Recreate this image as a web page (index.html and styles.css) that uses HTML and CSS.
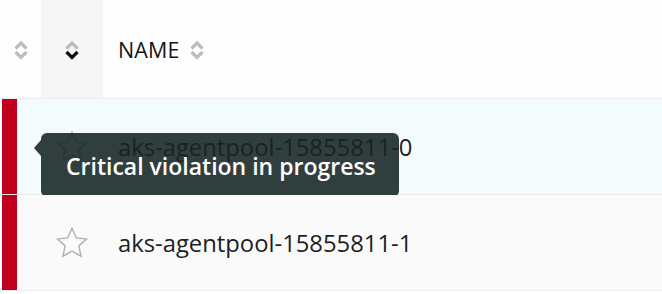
FILE: index.html
```html
<!DOCTYPE html>
<html>
<head>
<meta charset="utf-8">
<link rel="stylesheet" href="styles.css">
</head>
<body>
<div class="table">
  <div class="row head">
    <div class="cell c1">
      <svg class="sort" viewBox="0 0 16 24" width="16" height="24"><polyline points="2.5,10.5 8,5 13.5,10.5" class="g"/><polyline points="2.5,14 8,19.5 13.5,14" class="g"/></svg>
    </div>
    <div class="cell c2 shaded">
      <svg class="sort" viewBox="0 0 16 24" width="16" height="24"><polyline points="2.5,10.5 8,5 13.5,10.5" class="g"/><polyline points="2.5,14 8,19.5 13.5,14" class="k"/></svg>
    </div>
    <div class="cell c3">
      <span class="hname">NAME</span>
      <svg class="sort small" viewBox="0 0 16 24" width="16" height="24"><polyline points="2.5,10.5 8,5 13.5,10.5" class="g"/><polyline points="2.5,14 8,19.5 13.5,14" class="g"/></svg>
    </div>
  </div>
  <div class="row body active">
    <div class="cell c1"><div class="bar"></div></div>
    <div class="cell c2">
      <svg class="star" viewBox="0 0 24 24" width="36" height="36"><polygon points="12,2.2 14.9,8.6 21.6,9.3 16.6,13.9 18,20.8 12,17.4 6,20.8 7.4,13.9 2.4,9.3 9.1,8.6"/></svg>
    </div>
    <div class="cell c3"><span class="name">aks-agentpool-15855811-0</span></div>
    <div class="tooltip">Critical violation in progress</div>
  </div>
  <div class="row body">
    <div class="cell c1"><div class="bar"></div></div>
    <div class="cell c2">
      <svg class="star" viewBox="0 0 24 24" width="36" height="36"><polygon points="12,2.2 14.9,8.6 21.6,9.3 16.6,13.9 18,20.8 12,17.4 6,20.8 7.4,13.9 2.4,9.3 9.1,8.6"/></svg>
    </div>
    <div class="cell c3"><span class="name">aks-agentpool-15855811-1</span></div>
  </div>
</div>
</body>
</html>
```
FILE: styles.css
```css
html, body {
  margin: 0;
  padding: 0;
  background: #ffffff;
  font-family: "Open Sans", "Liberation Sans", sans-serif;
}
.table {
  width: 662px;
}
.row {
  display: grid;
  grid-template-columns: 41px 62px 1fr;
  border-bottom: 1px solid #ebebeb;
  position: relative;
}
.row.head {
  height: 98px;
  background: #fefefe;
}
.row.body {
  height: 95px;
  background: #fafafa;
}
.row.body.active {
  background: #f3fbfc;
}
.cell {
  display: flex;
  align-items: center;
}
.c1, .c2 {
  justify-content: center;
}
.row.body .c1 {
  justify-content: flex-start;
  align-items: stretch;
  background: linear-gradient(to right, #ffffff 0 17px, #fafafa 17px);
}
.row.body.active .c1 {
  background: linear-gradient(to right, #ffffff 0 17px, #f3fbfc 17px);
}
.shaded {
  background: #f6f6f6;
}
.c3 {
  padding-left: 15px;
}
.bar {
  width: 15px;
  margin-left: 2px;
  background: #c0001b;
}
.sort {
  display: block;
  margin-top: 2px;
}
.sort polyline {
  fill: none;
  stroke-width: 3.2;
  stroke-linecap: butt;
  stroke-linejoin: miter;
}
.sort .g { stroke: #bdbdbd; }
.sort .k { stroke: #111111; }
.sort.small {
  margin-left: 10px;
}
.hname {
  font-size: 21.5px;
  font-weight: 500;
  color: #151515;
  letter-spacing: 0.1px;
}
.name {
  font-size: 23.8px;
  color: #1e1e1e;
  margin-top: 1px;
}
.star polygon {
  fill: none;
  stroke: #b3b3b3;
  stroke-width: 1;
  stroke-linejoin: miter;
}
.star {
  display: block;
  margin-left: -1px;
}
.tooltip {
  position: absolute;
  left: 41px;
  top: 34px;
  width: 358px;
  height: 64px;
  box-sizing: border-box;
  padding-left: 25px;
  display: flex;
  align-items: center;
  background: rgba(22, 35, 35, 0.88);
  color: #ffffff;
  border-radius: 6px;
  font-size: 23px;
  font-weight: 600;
  padding-top: 2px;
}
.tooltip::before {
  content: "";
  position: absolute;
  left: -7px;
  top: 7px;
  border-top: 8px solid transparent;
  border-bottom: 8px solid transparent;
  border-right: 7px solid rgba(22, 35, 35, 0.88);
}
```
